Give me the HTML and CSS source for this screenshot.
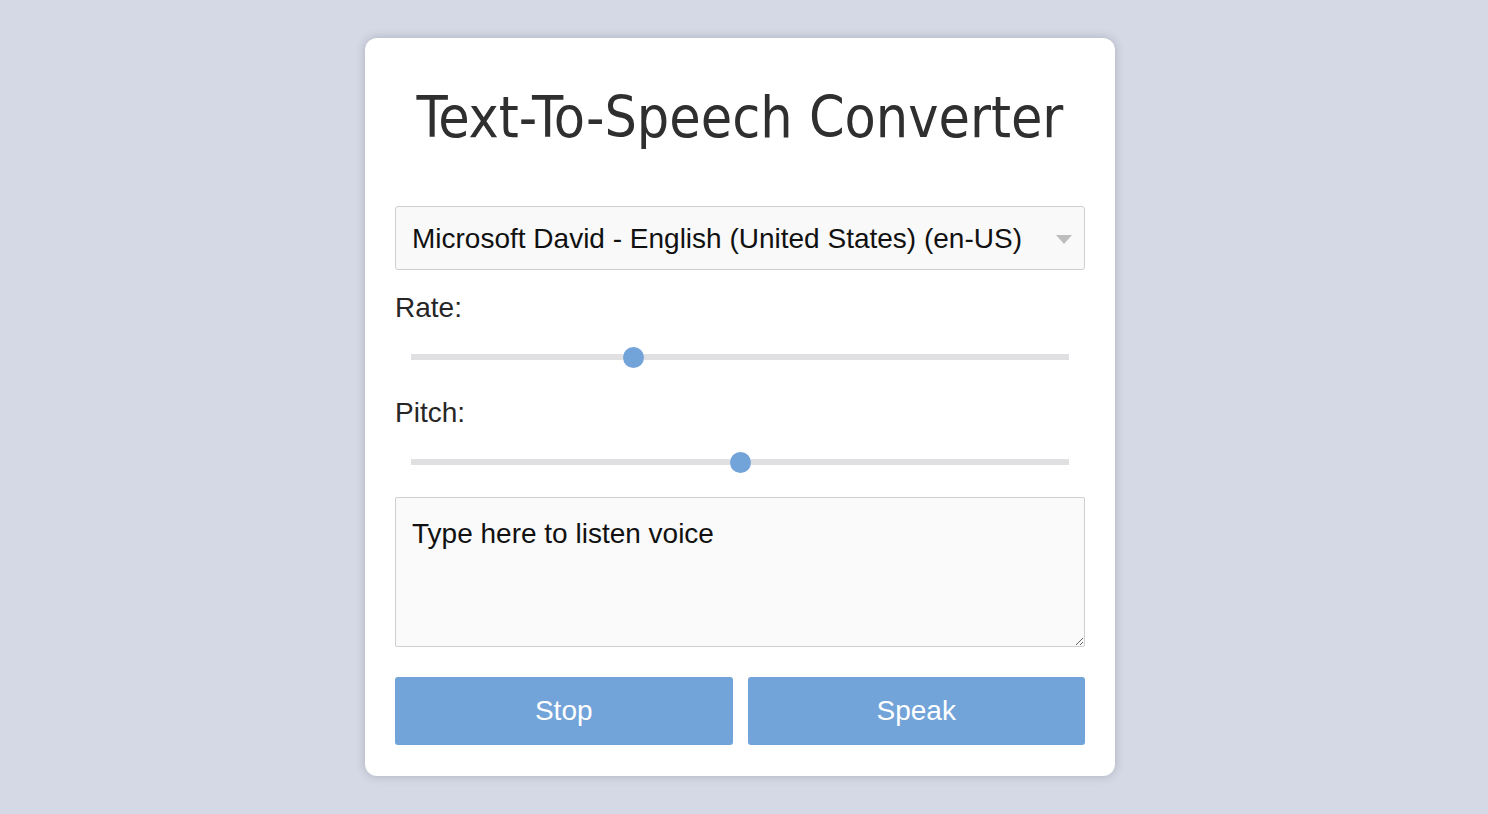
FILE: index.html
```html
<!DOCTYPE html>
<html lang="en">
<head>
<meta charset="utf-8">
<title>Text-To-Speech Converter</title>
<link rel="stylesheet" href="styles.css">
</head>
<body>
<main class="page">
  <section class="card">
    <h1 class="title">Text-To-Speech Converter</h1>
    <div class="select-wrap">
      <select class="voice">
        <option>Microsoft David - English (United States) (en-US)</option>
        <option>Microsoft Zira - English (United States) (en-US)</option>
      </select>
    </div>
    <label class="label" for="rate">Rate:</label>
    <div class="range-wrap">
      <input class="range" id="rate" type="range" min="0.5" max="2" step="0.1" value="1">
    </div>
    <label class="label label-pitch" for="pitch">Pitch:</label>
    <div class="range-wrap">
      <input class="range" id="pitch" type="range" min="0" max="2" step="0.1" value="1">
    </div>
    <textarea class="text" placeholder="Type here to listen voice">Type here to listen voice</textarea>
    <div class="buttons">
      <button class="btn" type="button">Stop</button>
      <button class="btn" type="button">Speak</button>
    </div>
  </section>
</main>
</body>
</html>
```
FILE: styles.css
```css
* { box-sizing: border-box; }

html, body {
  margin: 0;
  padding: 0;
  background: #d5d9e5;
  font-family: "Liberation Sans", Arial, sans-serif;
}

.page {
  display: flex;
  justify-content: center;
  padding: 38px 8px 0 0;
  min-height: 814px;
}

.card {
  width: 750px;
  height: 738px;
  background: #ffffff;
  border-radius: 12px;
  box-shadow: 0 0 10px rgba(60, 66, 90, 0.28);
  padding: 30px 30px 31px;
  display: flex;
  flex-direction: column;
}

.title {
  margin: 11px 0 51px;
  height: 76px;
  font-family: "DejaVu Sans Condensed", "DejaVu Sans", sans-serif;
  font-stretch: condensed;
  font-weight: 400;
  font-size: 56.8px;
  line-height: 76px;
  color: #2f2f2f;
  text-align: center;
  white-space: nowrap;
}

.select-wrap {
  position: relative;
  height: 64px;
}

.select-wrap::after {
  content: "";
  position: absolute;
  right: 13px;
  top: 29px;
  border-left: 8.5px solid transparent;
  border-right: 8.5px solid transparent;
  border-top: 9px solid #bdbdbd;
  pointer-events: none;
}

.voice {
  appearance: none;
  -webkit-appearance: none;
  width: 100%;
  height: 64px;
  padding: 0 58px 0 16px;
  border: 1px solid #cfcfcf;
  border-radius: 3px;
  background: #f9f9f9;
  font-family: "Liberation Sans", Arial, sans-serif;
  font-size: 28px;
  color: #111;
  outline: none;
}

.label {
  display: block;
  margin-top: 20px;
  height: 36px;
  font-size: 28px;
  line-height: 36px;
  color: #262626;
}

.label-pitch { margin-top: 28px; }

.range-wrap {
  margin-top: 21px;
  height: 20px;
  padding: 0 16px;
}

.range {
  -webkit-appearance: none;
  appearance: none;
  display: block;
  width: 100%;
  height: 20px;
  margin: 0;
  background: transparent;
  outline: none;
}

.range::-webkit-slider-runnable-track {
  height: 6px;
  background: #e0e0e2;
  border: none;
}

.range::-webkit-slider-thumb {
  -webkit-appearance: none;
  appearance: none;
  width: 21px;
  height: 21px;
  margin-top: -7.5px;
  border-radius: 50%;
  background: #72a3d9;
  border: none;
}

.text {
  display: block;
  margin-top: 25px;
  width: 100%;
  height: 150px;
  padding: 15px 16px;
  border: 1px solid #cfcfcf;
  border-radius: 2px;
  background: #fafafa;
  font-family: "Liberation Sans", Arial, sans-serif;
  font-size: 28px;
  line-height: 1.5;
  color: #111;
  outline: none;
}

.buttons {
  display: flex;
  gap: 15px;
  margin-top: 30px;
}

.btn {
  flex: 1;
  height: 68px;
  border: none;
  border-radius: 3px;
  background: #72a3d9;
  color: #ffffff;
  font-family: "Liberation Sans", Arial, sans-serif;
  font-size: 28px;
}
```
